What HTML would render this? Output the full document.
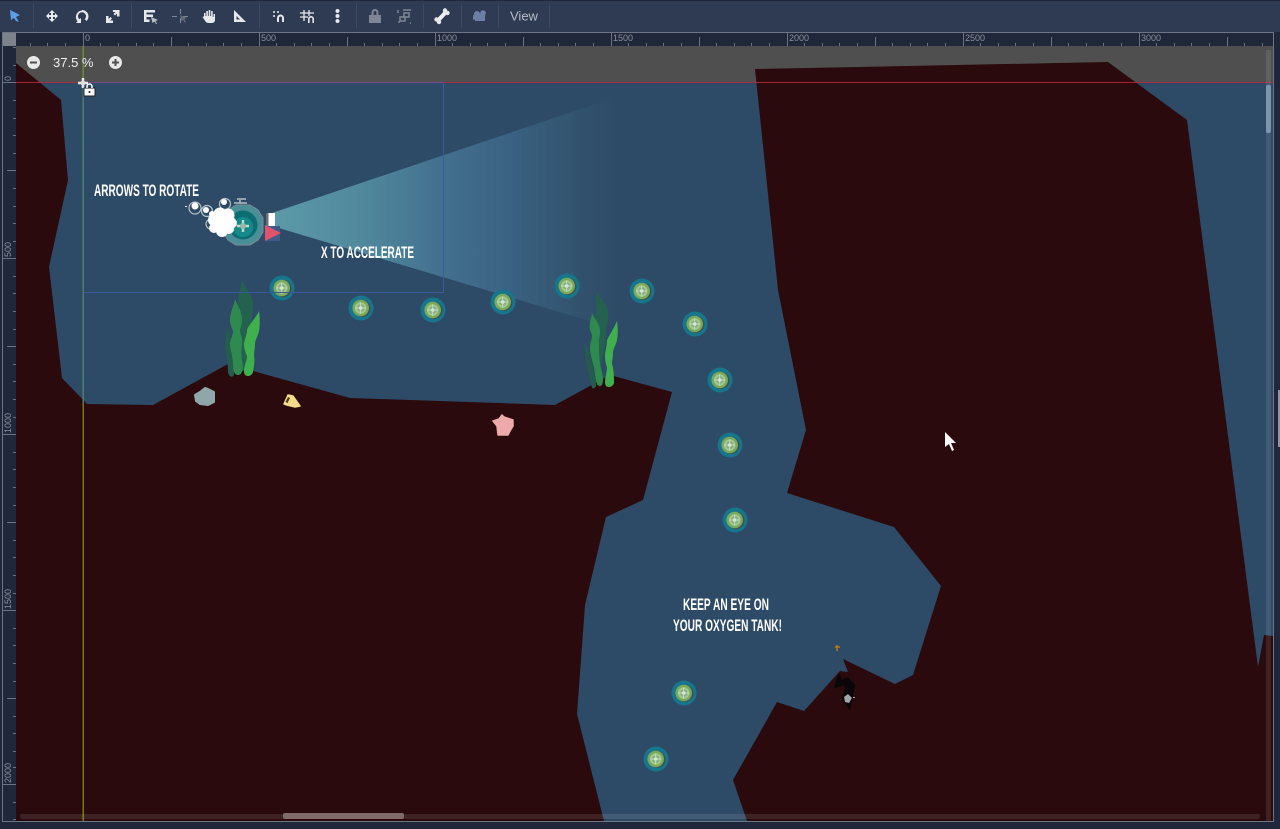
<!DOCTYPE html>
<html><head><meta charset="utf-8"><style>
html,body{margin:0;padding:0;background:#20273a;width:1280px;height:829px;overflow:hidden}
svg{display:block}
text{font-family:"Liberation Sans",sans-serif}
.r{font-size:9px;fill:#8b919e}
.t{font-family:"Liberation Sans Narrow","Liberation Sans",sans-serif;font-weight:700;fill:#fff;font-size:17px}
</style></head><body>
<svg width="1280" height="829" viewBox="0 0 1280 829" xmlns="http://www.w3.org/2000/svg">
<defs>
<linearGradient id="cone" gradientUnits="userSpaceOnUse" x1="272" y1="0" x2="612" y2="0">
<stop offset="0" stop-color="#5b9aa8"/><stop offset=".24" stop-color="#528a9e"/><stop offset=".38" stop-color="#4a7d96"/><stop offset=".5" stop-color="#43708f"/><stop offset=".62" stop-color="#3e6888"/><stop offset=".63" stop-color="#3d6687"/><stop offset=".73" stop-color="#396080"/><stop offset=".74" stop-color="#385e7d"/><stop offset=".88" stop-color="#335570"/><stop offset=".89" stop-color="#32526e"/><stop offset="1" stop-color="#2e4c68"/>
</linearGradient>
<g id="p"><circle r="12.500" fill="#17758c"/><circle cx="1" cy=".5" r="8.500" fill="#3c5250"/><circle cx="-.3" r="8.300" fill="#79a95c"/><circle cx="-.3" r="5.800" fill="#a3c88d"/><circle cx="-.3" r="3.800" fill="#86ad88"/><circle cx="-.3" r="1.800" fill="#d8e6d2"/><path d="M-5.500 0H5M-.3-5.500V5.500" stroke="#d8e6d2" stroke-width=".7"/></g>
</defs>
<rect width="1280" height="829" fill="#20273a"/>
<!-- toolbar -->
<rect width="1280" height="32" fill="#2f3b52"/>
<rect width="1280" height="1" fill="#20273a"/>
<g stroke="#3e4a60" stroke-width="1"><path d="M33.500 4V28M131.500 4V28M259.500 4V28M356.500 4V28M423.500 4V28M461.500 4V28M498.500 4V28M549.500 4V28"/></g>
<path d="M10 10L20 15L16 17L19 22L16 21L14 18L11 20Z" fill="#5a9fe8"/>
<g fill="#e6e8ec" stroke="none">
<path d="M52 10l3 3h-2v2h2v-2l3 3-3 3v-2h-2v2h2l-3 3-3-3h2v-2h-2v2l-3-3 3-3v2h2v-2h-2z"/>
<path d="M82 10a6.500 6.500 0 0 1 6.500 6.500c0 2-1 3.500-2 4.500l-1.800-1.800a4 4 0 1 0-5.400 0l1.700-1.200v5h-5l1.500-1.800a6.500 6.500 0 0 1 4.500-10.700z"/>
<path d="M106 16h2.500v3l2-2 1.500 1.500-2 2h3v2.500H106zM113 10h6.500v6.500H117v-3l-2 2-1.500-1.500 2-2h-2.600z"/>
<path d="M144 10h11v2.500h-8.500v2H153V17h-6.500v2.500h3V22H144z"/><path d="M151 17l7 3-2.500 1 1.500 2.500-1 .5-1.500-2.500-2 1.500z" fill="#b9bec8"/>
<path d="M204 17v-4h1.500v3h.8v-5h1.600v5h.8v-6h1.600v6h.8v-5h1.600v6h.8v-3h1.500v6c0 2-1.500 3-3.500 3h-3c-2 0-3-1.500-4-3l-2-3 1.200-.7z"/>
<path d="M234 10l12 12h-12zM236.500 16v3.500h3.500z" fill-rule="evenodd"/>
<circle cx="274" cy="12" r="1"/><circle cx="278" cy="12" r="1"/><circle cx="274" cy="16" r="1"/>
<path d="M277 22v-4a3.500 3.500 0 0 1 7 0v4h-2v-4a1.500 1.500 0 0 0-3 0v4z"/>
<path d="M300 13h14M300 17h8M304 10v11M309 10v6" stroke="#e6e8ec" stroke-width="1.300" fill="none"/><path d="M308 23v-4a3 3 0 0 1 6 0v4h-1.600v-4a1.400 1.400 0 0 0-2.800 0v4z"/>
<circle cx="337.500" cy="11" r="2"/><circle cx="337.500" cy="16" r="2"/><circle cx="337.500" cy="21" r="2"/>
<path d="M438 20.500L446 12" stroke="#f0f0f0" stroke-width="4"/><circle cx="436.500" cy="19.500" r="2.200"/><circle cx="439" cy="22" r="2.200"/><circle cx="445" cy="10.500" r="2.200"/><circle cx="447.500" cy="13" r="2.200"/>
</g>
<g fill="#7f8796">
<path d="M177 16h-5v1h5zM183 16h5v1h-5zM180 9v5h1V9zM180 18v5h1v-5z"/><path d="M180 15l7 3-2.500 1 1.500 3-1.500.5-1-2.500-2 1.500z" fill="#5f6878"/>
<path d="M369 15h12v8h-12zM371.500 15v-2.500a3.500 3.500 0 0 1 7 0V15h-2v-2.500a1.500 1.500 0 0 0-3 0V15z"/>
<path d="M398 13v-3M403 10h7M411 10h-1M399 23v-2M410 23h1M404 13h5v4h-4v4h-5v-4h4z" stroke="#7f8796" stroke-width="1.500" fill="none"/>
</g>
<g fill="#6a7ea8"><circle cx="477" cy="14" r="3"/><circle cx="483" cy="13" r="2.800"/><rect x="475" y="14" width="10" height="7"/><path d="M473 15v5l3-1v-3z"/></g>
<text x="510" y="20.500" style="font-size:13px;fill:#b6bcc8">View</text>
<!-- viewport -->
<rect x="2" y="32" width="1272" height="790" fill="#6d7484"/>
<rect x="3" y="33" width="1270" height="788" fill="#20273a"/>
<rect x="3" y="33" width="13" height="13" fill="#7d828c"/>
<rect x="16" y="46" width="1257" height="775" fill="#2d4a66"/>
<rect x="16" y="46" width="1257" height="36" fill="#4f4f4f"/>
<!-- cone -->
<path d="M272 213L613 98V328L272 226Z" fill="url(#cone)"/>
<!-- terrain -->
<g fill="#2a0a0c">
<path d="M16 63L61 100L68 180L49 267L62 378L87 404L153 405L228 364L350 398L555 405L610 375L672 392L643 500L606 517L585 605L577 714L604 821H16Z"/>
<path d="M755 69L1108 62L1187 120L1258 667L1264 635L1273 636V821H747L733 780L777 702L804 711L840 671L848 672L843 659L895 684L913 675L941 586L894 527L787 493L806 430L778 290Z"/>
</g>
<!-- kelp 1 -->
<path d="M242 280C245 288 252 294 253 303C254 312 250 320 252 330C253 338 248 342 248 347C249 355 246 362 245 370L238 372L240 347L238 300Z" fill="#24614f"/>
<path d="M227 327C230 335 232 340 232 347C233 356 235 366 234 375C232 378 229 377 228 372C228 362 226 355 225 347C225 340 226 334 227 327Z" fill="#245d4d"/>
<path d="M235 299C238 306 242 312 242 320C242 326 240 328 240 331C241 336 243 338 242 344C241 350 241 358 243 366C243 372 241 375 238 375C234 375 233 370 233 364C233 356 230 350 230 343C231 338 233 335 233 331C231 326 230 324 230 320C230 312 234 306 235 299Z" fill="#2f8a4f"/>
<path d="M259 311C260 318 260 325 259 331C258 336 255 340 255 344C255 348 254 352 254 356C255 360 254 366 253 372C252 375 250 376 248 376C245 376 244 374 244 371C244 366 247 361 247 356C245 352 244 348 244 344C245 338 247 335 247 330C249 324 256 318 259 311Z" fill="#40b04f"/>
<!-- kelp 2 -->
<path d="M597 292C600 298 607 304 608 311C609 320 605 328 606 336C606 346 603 352 602 360L598 380L594 350L596 310Z" fill="#24614f"/>
<path d="M585 341C588 350 591 356 592 364C593 372 596 380 596 386C594 390 592 389 591 384C589 376 588 372 587 366C585 358 585 350 585 341Z" fill="#245d4d"/>
<path d="M592 313C595 320 600 324 600 331C600 338 598 340 599 346C599 354 599 362 602 372C604 380 603 386 600 386C596 386 596 380 595 374C594 364 590 356 590 348C590 342 592 340 592 335C590 330 589 328 590 324C590 320 592 316 592 313Z" fill="#2f8a4f"/>
<path d="M617 321C618 328 618 334 617 340C616 345 613 349 613 353C613 357 612 360 612 364C614 370 614 378 614 383C613 386 611 387 609 387C606 387 605 385 605 382C605 377 607 372 607 367C605 362 605 358 605 354C606 348 607 345 607 340C610 334 614 328 617 321Z" fill="#40b04f"/>
<!-- creatures -->
<path d="M195 395L200 392L205 388L208 389L214 392L214 402L208 405L200 404L196 401Z" fill="#8fa6aa" stroke="#8fa6aa" stroke-width="2" stroke-linejoin="round"/>
<path d="M284 404L288 395L293 396L300 406L295 407L287 405Z" fill="#f5dc8a" stroke="#f5dc8a" stroke-width="1.500" stroke-linejoin="round"/><path d="M285.500 402L288 397L290 398L287.500 403Z" fill="#4a3a20"/>
<path d="M493 421L499 419L502 415L504 417L513 420L513 426L510 431L508 435L498 435L497 426Z" fill="#eeaaaa" stroke="#eeaaaa" stroke-width="1.500" stroke-linejoin="round"/>
<!-- pickups -->
<use href="#p" x="282" y="288"/><use href="#p" x="361" y="308"/><use href="#p" x="433" y="310"/><use href="#p" x="503" y="302"/><use href="#p" x="567" y="286"/><use href="#p" x="642" y="291"/><use href="#p" x="695" y="324"/><use href="#p" x="720" y="380"/><use href="#p" x="730" y="445"/><use href="#p" x="735" y="520"/><use href="#p" x="684" y="693"/><use href="#p" x="656" y="759"/>
<!-- ship -->
<path d="M236 205H250L258 210L263 218V232L258 240L250 245H236L228 240L223 232V218L228 210Z" fill="#4a8f98" stroke="#7b8e98" stroke-width="1"/>
<circle cx="243" cy="225" r="14.500" fill="#0c6e74"/><circle cx="243" cy="227" r="10" fill="#148a8a"/>
<path d="M237 226H249M243 220V232" stroke="#c4d8c8" stroke-width="2.400"/><circle cx="243" cy="226" r="3" fill="#9cb8a8"/>
<path d="M234 203H247M240 200V203M237 199H246" stroke="#b8c0c0" stroke-width="1.500"/>
<rect x="232" y="221" width="5" height="5" fill="#9ed0e0"/>
<g fill="none" stroke="#b8c0c8" stroke-width="1.200"><circle cx="195" cy="208" r="6"/><circle cx="207" cy="211" r="5.500"/><circle cx="225" cy="204" r="5.500"/><circle cx="211" cy="224" r="5"/></g>
<circle cx="195" cy="206" r="3.500" fill="#fff"/><circle cx="224" cy="202" r="3" fill="#fff"/><circle cx="206" cy="210" r="3" fill="#fff"/><rect x="185" y="206" width="2" height="1" fill="#fff"/>
<g fill="#fff"><circle cx="220" cy="214" r="6.500"/><circle cx="228" cy="215" r="6.500"/><circle cx="214" cy="220" r="6"/><circle cx="230" cy="223" r="6.500"/><circle cx="222" cy="222" r="9.500"/><circle cx="214" cy="228" r="5"/><circle cx="222" cy="231" r="6"/><circle cx="229" cy="229" r="5"/><circle cx="212" cy="214" r="3"/></g>
<rect x="266" y="213" width="9" height="13" fill="#fff"/><rect x="266" y="213" width="2.500" height="13" fill="#6a6f74"/>
<rect x="266" y="226" width="14" height="15" fill="#3f5a84"/><path d="M265 225L281 233L265 241Z" fill="#e0526e"/>
<!-- text -->
<text class="t" x="94" y="196" textLength="105" lengthAdjust="spacingAndGlyphs">ARROWS TO ROTATE</text>
<text class="t" x="321" y="258" textLength="93" lengthAdjust="spacingAndGlyphs">X TO ACCELERATE</text>
<text class="t" x="683" y="610" textLength="86" lengthAdjust="spacingAndGlyphs">KEEP AN EYE ON</text>
<text class="t" x="673" y="631" textLength="109" lengthAdjust="spacingAndGlyphs">YOUR OXYGEN TANK!</text>
<!-- dark sub -->
<path d="M839 672L834 688L845 685L842 700L850 710L852 702L855 685L848 677L842 680Z" fill="#0a0506"/>
<path d="M844 697L848 694L852 698L849 703L845 702Z" fill="#a2a6a6"/><rect x="853" y="697" width="2" height="1" fill="#a2a6a6"/>
<path d="M835 647H840M837 645V651" stroke="#b07a20" stroke-width="1.500"/>
<!-- guides -->
<path d="M84 82.500H443.500V292.500H84" fill="none" stroke="#3a5a9c" stroke-width="1"/>
<rect x="16" y="82" width="1257" height="1" fill="#c0263f" fill-opacity=".85"/>
<rect x="84" y="82" width="359" height="1" fill="#7d4a8c"/>
<rect x="82.500" y="46" width="1.500" height="36" fill="#6d8a2e"/>
<rect x="82.500" y="83" width="1.500" height="321" fill="#4f7d6c"/>
<rect x="82.500" y="404" width="1.500" height="417" fill="#757a00"/>
<!-- origin gizmo -->
<path d="M83 78v10M78 83h10" stroke="#eee" stroke-width="2.500"/><circle cx="83" cy="83" r="2.500" fill="#ddd"/>
<path d="M84 88h11v8h-11z" fill="#fff" stroke="#222"/><path d="M87 88v-1.500a2.500 2.500 0 0 1 5 0V88" fill="none" stroke="#fff" stroke-width="1.500"/><circle cx="89.500" cy="92" r="1" fill="#222"/>
<!-- zoom widget -->
<circle cx="33.500" cy="62.500" r="6.500" fill="#e8e8e8"/><rect x="30" y="61.500" width="7" height="2" fill="#4f4f4f"/>
<text x="53" y="67" style="font-size:13px;fill:#f0f0f0">37.5 %</text>
<circle cx="115.500" cy="62.500" r="6.500" fill="#e8e8e8"/><path d="M112 62.500h7M115.500 59v7" stroke="#4f4f4f" stroke-width="2"/>
<!-- rulers -->
<g stroke="#6c7282" stroke-width="1" fill="none">
<path d="M65.500 43v3M47.500 43v3M30.500 43v3M100.500 43v3M118.500 43v3M136.500 43v3M153.500 43v3M188.500 43v3M206.500 43v3M223.500 43v3M241.500 43v3M276.500 43v3M294.500 43v3M311.500 43v3M329.500 43v3M364.500 43v3M382.500 43v3M399.500 43v3M417.500 43v3M452.500 43v3M470.500 43v3M487.500 43v3M505.500 43v3M540.500 43v3M558.500 43v3M575.500 43v3M593.500 43v3M628.500 43v3M646.500 43v3M663.500 43v3M681.500 43v3M716.500 43v3M734.500 43v3M751.500 43v3M769.500 43v3M804.500 43v3M822.500 43v3M839.500 43v3M857.500 43v3M892.500 43v3M910.500 43v3M927.500 43v3M945.500 43v3M980.500 43v3M998.500 43v3M1015.500 43v3M1033.500 43v3M1068.500 43v3M1086.500 43v3M1103.500 43v3M1121.500 43v3M1156.500 43v3M1174.500 43v3M1191.500 43v3M1209.500 43v3M1244.500 43v3M1262.500 43v3"/>
<path d="M171.500 37v9M347.500 37v9M523.500 37v9M699.500 37v9M875.500 37v9M1051.500 37v9M1227.500 37v9"/>
<path d="M83.500 33v13M259.500 33v13M435.500 33v13M611.500 33v13M787.500 33v13M963.500 33v13M1139.500 33v13"/>
<path d="M13 47.500h3M13 65.500h3M13 100.500h3M13 118.500h3M13 135.500h3M13 153.500h3M13 188.500h3M13 206.500h3M13 223.500h3M13 241.500h3M13 276.500h3M13 293.500h3M13 311.500h3M13 329.500h3M13 364.500h3M13 381.500h3M13 399.500h3M13 417.500h3M13 452.500h3M13 469.500h3M13 487.500h3M13 505.500h3M13 540.500h3M13 557.500h3M13 575.500h3M13 593.500h3M13 628.500h3M13 645.500h3M13 663.500h3M13 681.500h3M13 716.500h3M13 733.500h3M13 751.500h3M13 767.500h3M13 802.500h3M13 819.500h3"/>
<path d="M7 170.500h9M7 346.500h9M7 522.500h9M7 698.500h9"/>
<path d="M3 82.500h13M3 258.500h13M3 434.500h13M3 610.500h13M3 784.500h13"/>
</g>
<g>
<text class="r" x="85" y="41">0</text><text class="r" x="261" y="41">500</text><text class="r" x="437" y="41">1000</text><text class="r" x="613" y="41">1500</text><text class="r" x="789" y="41">2000</text><text class="r" x="965" y="41">2500</text><text class="r" x="1141" y="41">3000</text>
<text class="r" transform="translate(11 81) rotate(-90)">0</text>
<text class="r" transform="translate(11 257) rotate(-90)">500</text>
<text class="r" transform="translate(11 433) rotate(-90)">1000</text>
<text class="r" transform="translate(11 609) rotate(-90)">1500</text>
<text class="r" transform="translate(11 783) rotate(-90)">2000</text>
</g>
<!-- scrollbars -->
<rect x="1266" y="50" width="5" height="771" fill="#fff" fill-opacity=".1"/>
<rect x="1266" y="85" width="5" height="48" rx="2" fill="#7b96aa"/>
<rect x="20" y="814" width="1240" height="5" rx="2" fill="#fff" fill-opacity=".1"/>
<rect x="283" y="813" width="121" height="6" rx="2" fill="#806a6a"/>
<!-- right strip -->
<rect x="1278" y="390" width="2" height="57" fill="#8f94a0"/>
<!-- mouse -->
<path d="M945 432V447L949 444L952 451L954 450L951 443L956 443Z" fill="#fff"/>
</svg>
</body></html>
